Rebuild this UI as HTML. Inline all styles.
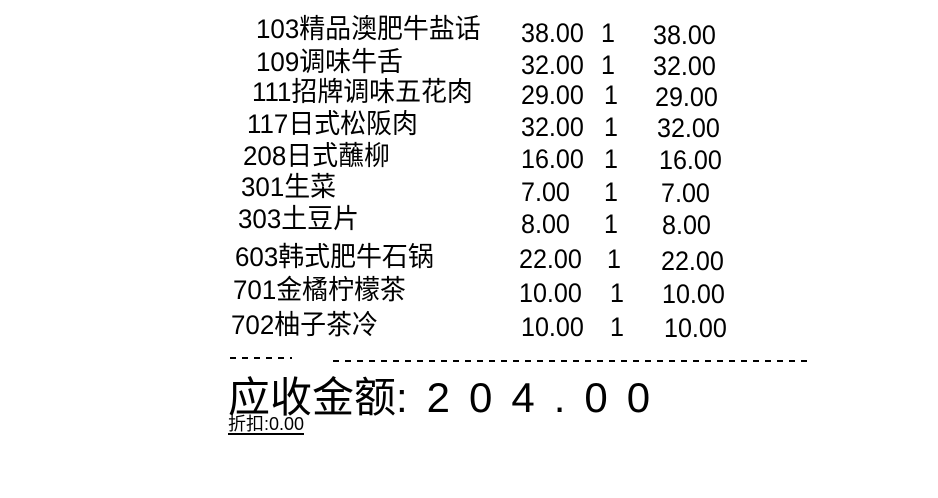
<!DOCTYPE html>
<html><head><meta charset="utf-8"><style>
body{margin:0;width:938px;height:498px;background:#fff;overflow:hidden;position:relative;font-family:"Liberation Sans","Noto Sans CJK SC",sans-serif;color:#000}
.t{position:absolute;font-size:27px;line-height:28px;white-space:nowrap;transform:scaleX(0.93);transform-origin:left}
.t.c{font-size:27px;transform:scaleX(0.96)}
.big{position:absolute;left:228px;top:375px;font-size:42px;line-height:46px;white-space:nowrap}
.big .n{letter-spacing:19px;font-family:"Liberation Sans",sans-serif}
.dash{position:absolute;top:357px;height:2px;background:repeating-linear-gradient(90deg,#000 0 6px,transparent 6px 12px)}
</style></head><body>
<div class="t c" style="left:256px;top:15px">103精品澳肥牛盐话</div>
<div class="t c" style="left:256px;top:48px">109调味牛舌</div>
<div class="t c" style="left:252px;top:78px">111招牌调味五花肉</div>
<div class="t c" style="left:247px;top:110px">117日式松阪肉</div>
<div class="t c" style="left:243px;top:142px">208日式蘸柳</div>
<div class="t c" style="left:241px;top:173px">301生菜</div>
<div class="t c" style="left:238px;top:205px">303土豆片</div>
<div class="t c" style="left:235px;top:243px">603韩式肥牛石锅</div>
<div class="t c" style="left:233px;top:276px">701金橘柠檬茶</div>
<div class="t c" style="left:231px;top:311px">702柚子茶冷</div>

<div class="t" style="left:521px;top:19px">38.00</div><div class="t" style="left:601px;top:19px">1</div><div class="t" style="left:653px;top:21px">38.00</div>
<div class="t" style="left:521px;top:51px">32.00</div><div class="t" style="left:601px;top:51px">1</div><div class="t" style="left:653px;top:52px">32.00</div>
<div class="t" style="left:521px;top:81px">29.00</div><div class="t" style="left:604px;top:81px">1</div><div class="t" style="left:655px;top:83px">29.00</div>
<div class="t" style="left:521px;top:113px">32.00</div><div class="t" style="left:604px;top:113px">1</div><div class="t" style="left:657px;top:114px">32.00</div>
<div class="t" style="left:521px;top:145px">16.00</div><div class="t" style="left:604px;top:145px">1</div><div class="t" style="left:659px;top:146px">16.00</div>
<div class="t" style="left:521px;top:178px">7.00</div><div class="t" style="left:604px;top:178px">1</div><div class="t" style="left:661px;top:179px">7.00</div>
<div class="t" style="left:521px;top:210px">8.00</div><div class="t" style="left:604px;top:210px">1</div><div class="t" style="left:662px;top:211px">8.00</div>
<div class="t" style="left:519px;top:245px">22.00</div><div class="t" style="left:607px;top:245px">1</div><div class="t" style="left:661px;top:247px">22.00</div>
<div class="t" style="left:519px;top:279px">10.00</div><div class="t" style="left:610px;top:279px">1</div><div class="t" style="left:662px;top:280px">10.00</div>
<div class="t" style="left:521px;top:313px">10.00</div><div class="t" style="left:610px;top:313px">1</div><div class="t" style="left:664px;top:314px">10.00</div>

<div class="dash" style="left:230px;width:62px"></div>
<div class="dash" style="left:333px;width:476px;top:360px"></div>
<div class="big">应收金额<span class="n">:204.00</span></div>
<div style="position:absolute;left:228px;top:416px;font-size:18px;line-height:17px;border-bottom:2px solid #000;white-space:nowrap">折扣:0.00</div>
</body></html>
